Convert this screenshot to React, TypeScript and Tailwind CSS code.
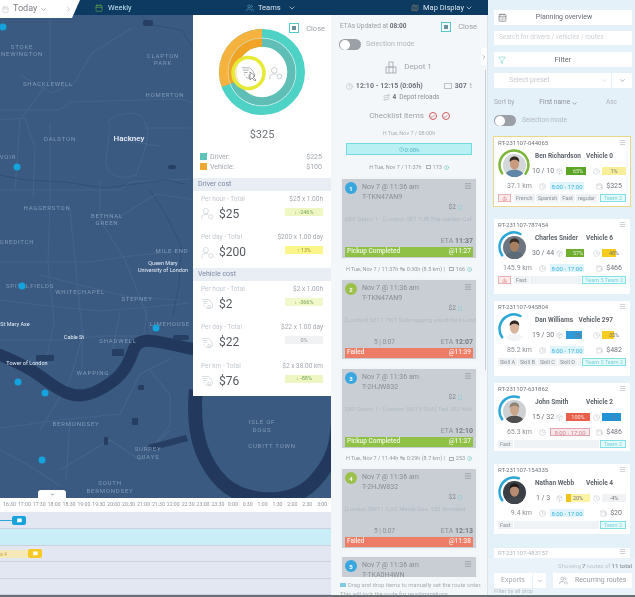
import React from "react";
import { ChevronDown, ChevronRight, Menu, Clock, Check, TriangleAlert, Filter, CalendarDays, Package, MessageSquare, Info, Users, Map as MapIcon, Calendar, Route, Wallet } from "lucide-react";

const Van = ({ s = 14, c = "#a9b0ba" }: { s?: number; c?: string }) => (
  <svg width={s} height={s} viewBox="0 0 16 16" fill="none" stroke={c} strokeWidth="0.8">
    <path d="M1 3h8M2 5.5h6M3 8h4M4.5 10.5H3" />
    <path d="M9 3l3 2.5 2 3.5v3.5l-2 1.5h-5l-2-1.5" />
    <circle cx="10" cy="12" r="1.7" />
  </svg>
);
const Driver = ({ s = 14, c = "#a9b0ba" }: { s?: number; c?: string }) => (
  <svg width={s} height={s} viewBox="0 0 16 16" fill="none" stroke={c} strokeWidth="0.8">
    <circle cx="6" cy="5" r="3.2" />
    <path d="M1 15v-2.5c0-2 2-3.5 5-3.5 1 0 2 .2 2.8.5" />
    <circle cx="12" cy="12" r="2.6" />
  </svg>
);
const CloseBox = () => (
  <span className="w-[10px] h-[10px] border border-[#58c8cf] flex items-center justify-center">
    <span className="w-[4px] h-[4px] bg-[#6b8f9c]" />
  </span>
);
const Toggle = () => (
  <span className="w-[22px] h-[11px] rounded-full bg-[#9ba0a6] flex items-center">
    <span className="w-[10px] h-[10px] ml-[1px] rounded-full bg-white" />
  </span>
);

const labels: [string, number, number][] = [
  ["STOKE", 22, 46], ["NEWINGTON", 22, 53], ["SHACKLEWELL", 48, 83], ["CLAPTON", 163, 55], ["PARK", 163, 62],
  ["HOMERTON", 165, 94], ["DALSTON", 60, 138], ["VOIR", 8, 156], ["HAGGERSTON", 47, 207], ["BETHNAL", 107, 215],
  ["GREEN", 107, 222], ["OREDITCH", 17, 241], ["MILE END", 172, 250], ["SPITALFIELDS", 30, 285], ["WHITECHAPEL", 80, 291],
  ["STEPNEY", 137, 298], ["LIMEHOUSE", 170, 323], ["SHADWELL", 118, 340], ["WAPPING", 93, 372], ["BERMONDSEY", 76, 423],
  ["SURREY", 148, 448], ["QUAYS", 148, 456], ["SOUTH", 110, 482], ["BERMONDSEY", 110, 490], ["ISLE OF", 262, 421], ["DOGS", 262, 429], ["CUBITT TOWN", 272, 445],
];
const places: [string, number, number][] = [
  ["Queen Mary", 163, 263], ["University of London", 163, 270], ["St Mary Axe", 15, 324], ["Cable St", 74, 337], ["Tower of London", 27, 363],
];
const dots: [number, number][] = [[3, 27], [17, 167], [22, 286], [156, 328], [18, 382], [45, 393], [42, 460]];

function MapArt() {
  return (
    <svg className="absolute inset-0 w-full h-full" viewBox="0 15 331 483" preserveAspectRatio="none" fill="none">
      <g stroke="#4c6c93" strokeWidth="1.1" opacity="0.55">
        <path d="M0 110h60l10-8 110-3 12 3M20 75l32 18 22-10 18-30 40-25M50 20v60l-30 40-5 70M0 120l25-2 10 30-2 50M110 125c-8-8 20-14 30-10 6 8 10 15 6 30l-10 30c-10 4-30 4-30-14z" />
        <path d="M50 122v80l-2 60 6 60-8 40M0 190h120l10-8 60-3M70 210l6 60 6 60 0 40M120 140l40 6M145 128h45M100 180v40l25 40 20 50 8 30" />
        <path d="M0 262h90l40-6 60-6M40 275l40 10 50 12 50 3M0 300l40 5 60 6 50-4 40-4M84 330l-14 50-15 25-15 25M0 340l60 0 40-4 50 0M120 312l-8 40M147 310l-4 32" />
        <path d="M0 428l60-8 60-6 20-40 30-15M70 420l-4 60M0 450l30 16 30 20M60 470l50-30 30 20 30-30M150 370l20 25 0 30-20 25M196 200l-40-6-40 25" />
      </g>
      <g stroke="#2c4a70" strokeWidth="1" opacity="0.6">
        <path d="M140 15l12 10 30 5 12 20M0 175l25 5 40 2 40 6 30-4 30-4 20 4M150 190l16 25 15 30 -2 40 -6 30" />
      </g>
      <path d="M-5 353C25 365 35 372 47 381S75 402 97 391s30-22 36-40 27-8 60-2l50 6" stroke="#22395d" strokeWidth="12" />
      <path d="M196 390c-4 40 4 70 26 92s70 24 92 0 22-40 24-58" stroke="#22395d" strokeWidth="14" />
      <g fill="#263e61">
        <rect x="173" y="335" width="16" height="5" rx="2" />
        <rect x="112" y="349" width="12" height="7" rx="1" />
        <rect x="36" y="355" width="18" height="6" rx="1" />
        <path d="M148 445l38-10 2 6-38 10z" />
        <rect x="132" y="418" width="6" height="7" rx="1" />
        <rect x="104" y="437" width="4" height="8" rx="1" />
        <rect x="138" y="385" width="6" height="5" rx="1" />
        <rect x="143" y="20" width="10" height="6" rx="2" />
        <rect x="168" y="165" width="8" height="4" rx="2" />
      </g>
    </svg>
  );
}

function CostRow({ label, calc, value, chip, chipCls, icon }: { label: string; calc: string; value: string; chip: string; chipCls: string; icon: React.ReactNode }) {
  return (
    <div className="h-[38.5px] px-[8px] pt-[4px] flex flex-col">
      <div className="flex justify-between text-[6.5px] text-[#c3c8cf] leading-[9px]">
        <span>{label}</span>
        <span className="text-[#a3a8b0]">{calc}</span>
      </div>
      <div className="flex justify-between items-start">
        <div className="flex items-center gap-[5px] mt-[1px]">
          {icon}
          <span className="text-[12px] leading-[18px] text-[#555a62]">{value}</span>
        </div>
        <span className={`mt-[4px] h-[8px] w-[38px] flex items-center justify-center text-[5.5px] ${chipCls}`}>{chip}</span>
      </div>
    </div>
  );
}

function CostPanel() {
  return (
    <div className="absolute left-[193px] top-0 w-[138px] h-[381px] bg-white flex flex-col z-10">
      <div className="h-[26px] mb-[-13px] flex items-center justify-end gap-[7px] pr-[6px] pt-[1px]">
        <CloseBox />
        <span className="text-[7.5px] text-[#9ea4ab]">Close</span>
      </div>
      <div className="flex justify-center h-[87px]">
        <svg width="88" height="88" viewBox="-44 -44 88 88">
          <circle r="38.5" fill="none" stroke="#4fd2c6" strokeWidth="9" />
          <circle r="29.5" fill="none" stroke="#5fbfb6" strokeWidth="8.5" />
          <circle r="38.5" fill="none" stroke="#f5b23e" strokeWidth="9" strokeDasharray="97 316" pathLength="316" transform="rotate(-90) scale(1,-1)" />
          <circle r="29.5" fill="none" stroke="#f0a325" strokeWidth="8.5" strokeDasharray="97 316" pathLength="316" transform="rotate(-90) scale(1,-1)" />
          <circle r="34" fill="none" stroke="#ffffff" strokeWidth="0.6" opacity="0.55" />
          <circle cx="-13.5" cy="1" r="15.5" fill="#ffffff" fillOpacity="0.75" stroke="#e7ea34" strokeWidth="3.5" />
          <g transform="translate(-21,-7)"><Van s={15} c="#8d939b" /></g>
          <path d="M-12 0l0 8 2-2 3 3 1-1-3-3 2-1z" fill="#fff" stroke="#555" strokeWidth="0.6" />
          <g transform="translate(7,-6)"><Driver s={14} c="#b5bac1" /></g>
        </svg>
      </div>
      <div className="text-center text-[11px] leading-[14px] text-[#6e7379] mt-[13px]">$325</div>
      <div className="px-[7px] mt-[10px] text-[7px] leading-[10px] text-[#a3a8ae]">
        <div className="flex items-center"><span className="w-[7px] h-[7px] bg-[#5cc3b9] mr-[3px]" /><span>Driver:</span><span className="ml-auto mr-[2px]">$225</span></div>
        <div className="flex items-center"><span className="w-[7px] h-[7px] bg-[#eeaa33] mr-[3px]" /><span>Vehicle:</span><span className="ml-auto mr-[2px]">$100</span></div>
      </div>
      <div className="mt-[6px] h-[13px] bg-[#e9eef4] pl-[5px] text-[7px] leading-[13px] text-[#7e89a5]">Driver cost</div>
      <CostRow label="Per hour - Total" calc="$25 x 1.00h" value="$25" chip="↓ -246%" chipCls="bg-[#eef7c4] text-[#7aa55a]" icon={<Driver s={13} c="#c5cad0" />} />
      <CostRow label="Per day - Total" calc="$200 x 1.00 day" value="$200" chip="↑ 13%" chipCls="bg-[#fbf58a] text-[#a59a3a]" icon={<Driver s={13} c="#c5cad0" />} />
      <div className="h-[13px] bg-[#e9eef4] pl-[5px] text-[7px] leading-[13px] text-[#7e89a5]">Vehicle cost</div>
      <CostRow label="Per hour - Total" calc="$2 x 1.00h" value="$2" chip="↓ -366%" chipCls="bg-[#f0f8cc] text-[#7aa55a]" icon={<Van s={13} c="#c5cad0" />} />
      <CostRow label="Per day - Total" calc="$22 x 1.00 day" value="$22" chip="0%" chipCls="bg-[#f0f2f4] text-[#9aa0a6]" icon={<Van s={13} c="#c5cad0" />} />
      <CostRow label="Per km - Total" calc="$2 x 38.00 km" value="$76" chip="↓ -88%" chipCls="bg-[#eef7c4] text-[#7aa55a]" icon={<Van s={13} c="#c5cad0" />} />
    </div>
  );
}

function StopCard({ n, color, code, money, addr, svc, eta, status, at, ok, cut }: { n: number; color: string; code: string; money: string; addr?: string; svc?: string; eta?: string; status?: string; at?: string; ok: boolean; cut?: boolean }) {
  return (
    <div className={`mx-[9px] bg-[#f2f5f8] px-[2px] pt-[2px] ${cut ? "h-[22px] overflow-hidden" : "pb-[2px]"}`}>
      <div className="bg-[#c9ced4] h-[79px] px-[3px] pt-[3px] flex flex-col">
        <div className="flex items-start h-[20px]">
          <span className="w-[12px] h-[12px] rounded-full text-white text-[6px] font-bold flex items-center justify-center" style={{ backgroundColor: color }}>{n}</span>
          <div className="ml-[5px] text-[7px] leading-[10px] text-[#868d95]">
            <div>Nov 7 @ 11:36 am</div>
            <div>{code}</div>
          </div>
          <Menu className="ml-auto mr-[1px]" size={8} color="#8d939a" />
        </div>
        {!cut && (
          <>
            <div className="flex justify-end items-center gap-[2px] mt-[1px] h-[9px] text-[6.5px] text-[#8f959c] font-medium pr-[11px]">{money}<span className="w-[4px] h-[5px] border border-[#a8cdd3]" /></div>
            <div className="mt-[2px] text-[6px] leading-[10px] text-[#b0bac4] whitespace-nowrap">{addr}</div>
            <div className="mt-auto flex justify-between items-center text-[7px] leading-[10px] text-[#8a9097] pl-[29px] mb-[1px]">
              <span className="text-[6.5px]">{svc}</span>
              <span>ETA <b className="font-bold text-[#767c83]">{eta}</b></span>
            </div>
            <div className={`h-[10px] px-[2px] flex justify-between items-center text-[6.5px] font-medium text-white/85 mb-[1px] ${ok ? "bg-[#8fc146]" : "bg-[#ee7d67]"}`}>
              <span>{status}</span><span>{at}</span>
            </div>
          </>
        )}
      </div>
    </div>
  );
}

function RouteRow({ text, dur, cnt }: { text: string; dur?: string; cnt: string }) {
  return (
    <div className="h-[10px] flex justify-center items-center gap-[2px] text-[5.5px] text-[#959ba2] whitespace-nowrap">
      <span>{text}</span>
      {dur && <span>{dur}</span>}
      <span className="ml-[2px] w-[5px] h-[4px] border border-[#aab0b6]" />
      <span>{cnt}</span>
      <Info size={5} color="#49bfb4" />
    </div>
  );
}

function RoutePanel() {
  return (
    <div className="relative w-[157px] h-[580px] bg-[#f4f7fa] flex flex-col overflow-hidden border-r border-[#dde3ea]">
      <div className="h-[24px] flex items-center pl-[9px] pr-[10px] text-[6.5px] text-[#9aa0a6] shrink-0">
        <span>ETAs Updated at <b className="text-[#696f76]">08:00</b></span>
        <span className="ml-auto mr-[7px]"><CloseBox /></span>
        <span className="text-[7.5px]">Close</span>
      </div>
      <div className="h-[11px] pl-[8px] flex items-center gap-[5px] text-[7px] text-[#b3b8be] shrink-0"><Toggle /><span>Selection mode</span></div>
      <div className="h-[12px] mt-[11px] flex items-center justify-center gap-[7px] text-[8px] text-[#a2a7ad] shrink-0 ml-[-1px]">
        <svg width="12" height="13" viewBox="0 0 12 13" fill="none" stroke="#9da3aa" strokeWidth="0.8"><rect x="4" y="1" width="4" height="5" /><rect x="1" y="6" width="10" height="6" /><path d="M4 6v6M8 6v6" /></svg>
        <span>Depot 1</span>
      </div>
      <div className="mt-[7px] h-[12px] flex items-center justify-center gap-[3px] text-[7px] text-[#70767d] shrink-0">
        <Clock size={7} color="#b4bac0" /><b className="font-bold mr-[18px]">12:10 - 12:15 (0:06h)</b>
        <span className="w-[8px] h-[6px] border border-[#bcc1c7]" /><b className="font-bold">307</b><span className="text-[#a7acb2]">t</span>
      </div>
      <div className="h-[11px] flex items-center justify-center gap-[3px] text-[6.5px] text-[#8b9198] shrink-0 ml-[4px]">
        <Route size={7} color="#b4bac0" /><b className="text-[#70767d]">4</b><span>Depot reloads</span>
      </div>
      <div className="mt-[7px] h-[12px] flex items-center justify-center gap-[5px] text-[8px] text-[#9da3a9] shrink-0 ml-[1px]">
        <span>Checklist items</span>
        <span className="w-[8px] h-[8px] rounded-full border border-[#cf5a5f] flex items-center justify-center"><Check size={5} color="#b84a50" strokeWidth={3} /></span>
        <span className="w-[8px] h-[8px] rounded-full border border-[#cf5a5f] flex items-center justify-center"><Check size={5} color="#b84a50" strokeWidth={3} /></span>
      </div>
      <div className="mt-[6px] h-[10px] flex items-center justify-center text-[5.5px] text-[#a9aeb4] shrink-0">H Tue, Nov 7 / 08:00h</div>
      <div className="mx-[15px] mt-[5px] h-[12px] bg-[#b9f0f4] border border-[#74dae1] flex items-center justify-center gap-[1px] text-[6px] text-[#55b9c1] shrink-0">
        <Clock size={5} />0:08h
      </div>
      <div className="mt-[7px] shrink-0"><RouteRow text="H Tue, Nov 7 / 11:37h" cnt="173" /></div>
      <div className="mt-[5px] flex flex-col">
        <StopCard n={1} color="#39a7dd" code="T-TKN47AN9" money="$2" addr="DEP Depot 1 - [London SE1 1UB The Garden Caf" eta="11:37" status="Pickup Completed" at="@11:27" ok />
        <div className="h-[18px] flex items-center"><div className="w-full"><RouteRow text="H Tue, Nov 7 / 11:37h" dur="↹ 0:30h (8.5 km) |" cnt="166" /></div></div>
        <StopCard n={2} color="#9bc14b" code="T-TKN47AN9" money="$2" addr="[London] SE11 7WT Submapping sresthford Lond" svc="5 | 0:07" eta="12:07" status="Failed" at="@11:39" ok={false} />
        <div className="h-[6px]" />
        <StopCard n={3} color="#39a7dd" code="T-2HJW832" money="$2" addr="DEP Depot 1 - [London SW13 9DA] Tesl 353 Nok" eta="12:10" status="Pickup Completed" at="@11:37" ok />
        <div className="h-[17px] flex items-center"><div className="w-full"><RouteRow text="H Tue, Nov 7 / 11:44h" dur="↹ 0:29h (8.7 km) |" cnt="253" /></div></div>
        <StopCard n={4} color="#9bc14b" code="T-2HJW832" money="$2" addr="[London SW11 2JG] Marek Dee, 103 Wimbled" svc="5 | 0:07" eta="12:13" status="Failed" at="@11:38" ok={false} />
        <div className="h-[5px]" />
        <StopCard n={5} color="#39a7dd" code="T-TKA0H4WN" money="$2" ok cut />
      </div>
      <div className="absolute left-0 right-0 bottom-0 h-[18px] bg-[#f4f7fa] pl-[9px] pt-[4px] text-[5.8px] leading-[9px] text-[#a9aeb5] whitespace-nowrap">
        <span className="inline-block w-[6px] h-[4px] bg-[#7ecbe5] mr-[2px] align-middle" />Drag and drop items to manually set the route order.
        <div>This will lock the route for reoptimizations.</div>
      </div>
      <div className="absolute right-0 top-[33px] w-[6px] h-[17px] bg-white flex items-center justify-center"><ChevronRight size={6} color="#666" /></div>
      <div className="absolute right-[1px] top-[55px] w-[1.5px] h-[300px] bg-[#c6ced8]" />
    </div>
  );
}

const Face = ({ skin, hair, shirt, bg = "#cdd3d9" }: { skin: string; hair: string; shirt: string; bg?: string }) => (
  <svg width="23" height="23" viewBox="0 0 22 22">
    <clipPath id="a"><circle cx="11" cy="11" r="11" /></clipPath>
    <g clipPath="url(#a)">
      <rect width="22" height="22" fill={bg} />
      <path d="M2 22c0-5 4-7 9-7s9 2 9 7z" fill={shirt} />
      <ellipse cx="11" cy="9.5" rx="4.3" ry="5.5" fill={skin} />
      <path d="M6.5 8c-.5-4 2-5.5 4.500-5.500S15.800 4 15.500 8c-1-2-3-2.500-4.500-2.500S7.500 6 6.500 8z" fill={hair} />
    </g>
  </svg>
);

function Bar({ pct, fill, color, text, track = "bg-white" }: { pct: number; fill?: boolean; color: string; text: string; track?: string }) {
  return (
    <span className={`relative w-[24px] h-[8px] ${track} flex items-center justify-center text-[5.5px] text-[#777] overflow-hidden shrink-0`}>
      <span className="absolute left-0 top-0 bottom-0" style={{ width: `${pct}%`, backgroundColor: color }} />
      <span className={`relative ${fill ? "text-white/80" : ""}`}>{text}</span>
    </span>
  );
}

type DriverInfo = {
  id: string; name: string; veh: string; count: string; km: string; cost: string; face: React.ReactNode; ring: string; ringDash: string;
  b1: React.ReactNode; b2: React.ReactNode; tags: string[]; warn?: boolean; team: string; late?: boolean; h: string; sel?: boolean;
};

function DriverCard(d: DriverInfo) {
  return (
    <div className={`relative mr-[5px] bg-white ${d.h} px-[4px] flex flex-col shrink-0 ${d.sel ? "outline outline-1 outline-[#ecd788]" : ""}`}>
      <div className="flex items-center justify-between text-[6px] leading-[9px] text-[#6f757c] pt-[1px]">
        <span>{d.id}</span><Menu size={7} color="#aab0b6" />
      </div>
      <div className="flex items-start h-[32px] mt-[2px]">
        <div className="relative w-[32px] h-[32px] shrink-0 flex items-center justify-center">
          <svg className="absolute inset-0" width="32" height="32" viewBox="0 0 32 32" fill="none">
            <circle cx="16" cy="16" r="14.500" stroke={d.ring} strokeWidth="2.500" strokeDasharray={d.ringDash} pathLength="100" transform="rotate(-215 16 16)" strokeLinecap="round" />
          </svg>
          {d.face}
        </div>
        <div className="ml-[2px] flex-1 flex flex-col pt-[2px]">
          <div className="flex justify-between text-[6.5px] leading-[10px] font-bold text-[#5f656c] pl-[3px] pr-[13px]"><span>{d.name}</span><span>{d.veh}</span></div>
          <div className="flex items-center mt-[5px] text-[7px] text-[#6f757c] h-[10px]">
            <span className="w-[22px] text-center whitespace-nowrap shrink-0">{d.count}</span>
            <Package className="ml-[2px] mr-[3px] shrink-0" size={7} color="#c9ced4" />
            {d.b1}
            <Clock className="ml-[3px] mr-[2px] shrink-0" size={7} color="#c9ced4" />
            {d.b2}
          </div>
        </div>
      </div>
      <div className="flex items-center h-[10px] text-[7px] text-[#8b9096]">
        <span className="w-[34px] text-right whitespace-nowrap">{d.km}</span>
        <Clock className="ml-[7px] mr-[4px]" size={7} color="#bfc4ca" />
        {d.late ? (
          <span className="h-[8px] w-[40px] border border-[#e3a6ae] bg-[#f8e7ea] text-[#cc8a94] text-[6px] flex items-center justify-center">8:00 - 17:00</span>
        ) : (
          <span className="h-[8px] w-[34px] bg-[#dff5fb] text-[#3db4dc] text-[6px] flex items-center justify-center">8:00 - 17:00</span>
        )}
        <Wallet className="ml-auto mr-[3px]" size={7} color="#c4c9cf" />
        <span className="text-[#6f757c] pr-[4px]">{d.cost}</span>
      </div>
      <div className="flex items-center gap-[1px] mt-[2px] h-[10px] text-[5.5px] text-[#8c9299]">
        {d.warn && <span className="w-[13px] h-[8px] bg-[#fdeaea] border border-[#eeb2b2] flex items-center justify-center mr-[2px]"><TriangleAlert size={5} color="#e26d6d" /></span>}
        {d.tags.map((t) => <span key={t} className="bg-[#eff2f5] h-[8px] px-[2px] flex items-center">{t}</span>)}
        <span className="flex-1 bg-[#f0f3f6] h-[8px]" />
        <span className="h-[8px] px-[2px] min-w-[26px] border border-[#7fe0e6] bg-[#e6fafb] text-[#7ad3da] flex items-center justify-center whitespace-nowrap">{d.team}</span>
      </div>
    </div>
  );
}

function Btn({ children, cls = "" }: { children: React.ReactNode; cls?: string }) {
  return <div className={`h-[15px] bg-white flex items-center text-[7px] text-[#666c73] shrink-0 ${cls}`}>{children}</div>;
}

function RightPanel() {
  return (
    <div className="relative flex-1 h-[595px] bg-[#e5f1f9] flex flex-col pl-[6px] overflow-hidden">
      <div className="h-[10px] shrink-0" />
      <Btn cls="mr-[3px] pl-[4px] relative justify-center"><CalendarDays className="absolute left-[4px]" size={9} color="#7c8288" /><span className="ml-[-2px]">Planning overview</span></Btn>
      <div className="mt-[6px] mr-[3px] h-[14px] bg-white pl-[5px] flex items-center text-[6.5px] text-[#ccd1d6] shrink-0">Search for drivers / vehicles / routes</div>
      <Btn cls="mt-[7px] mr-[3px] relative justify-center"><Filter className="absolute left-[4px]" size={8} color="#7fdad6" /><span className="text-[7.5px]">Filter</span></Btn>
      <div className="mt-[6px] mr-[3px] h-[15px] flex gap-[1px] shrink-0">
        <div className="flex-1 bg-white flex items-center pl-[15px] text-[7px] text-[#c5cad0]">Select preset<ChevronDown className="ml-auto mr-[3px]" size={7} color="#d0d5da" /></div>
        <div className="w-[20px] bg-white flex items-center justify-center"><ChevronDown size={7} color="#7c8288" /></div>
      </div>
      <div className="mt-[10px] mr-[3px] h-[10px] flex items-center text-[6.5px] text-[#a4a9af] shrink-0">
        <span>Sort by</span>
        <span className="ml-[25px] text-[#8b9096]">First name</span><ChevronDown className="ml-[1px]" size={7} color="#777" />
        <span className="ml-auto text-[#adb2b8]">Asc</span><span className="w-[15px]" />
      </div>
      <div className="mt-[7px] h-[11px] flex items-center gap-[6px] text-[6.5px] text-[#b2b7bd] shrink-0"><Toggle /><span>Selection mode</span></div>
      <div className="mt-[11px] flex flex-col">
        <DriverCard sel h="h-[69px]" id="RT-231107-044065" name="Ben Richardson" veh="Vehicle 0" count="10 / 10" km="37.1 km" cost="$325" ring="#7db63c" ringDash="70 30"
          face={<Face skin="#c99a7d" hair="#33281f" shirt="#5f86a6" bg="#d3d7da" />}
          b1={<Bar pct={85} fill color="#5ba526" text="65%" />} b2={<Bar pct={100} color="#f9ef9a" text="1%" />}
          tags={["French", "Spanish", "Fast", "regular"]} warn team="Team 2" />
        <DriverCard h="h-[75px] mt-[13px]" id="RT-231107-787454" name="Charles Snider" veh="Vehicle 6" count="30 / 44" km="145.9 km" cost="$466" ring="#2ba6d8" ringDash="42 58"
          face={<Face skin="#a9805f" hair="#3a2c23" shirt="#5c6b78" bg="#6d7680" />}
          b1={<Bar pct={75} fill color="#6fae2e" text="57%" />} b2={<Bar pct={60} color="#f5cc1e" text="48%" />}
          tags={["Fast"]} warn team="Team 5 Team 2" />
        <DriverCard h="h-[75px] mt-[7px]" id="RT-231107-945804" name="Dan Williams" veh="Vehicle 297" count="19 / 30" km="85.2 km" cost="$482" ring="#2ba6d8" ringDash="42 58"
          face={<Face skin="#d8b49c" hair="#2e2722" shirt="#f2f4f6" bg="#ffffff" />}
          b1={<Bar pct={65} color="#2f9ad9" text="5%" />} b2={<Bar pct={50} color="#f8cc22" text="35%" />}
          tags={["Skill A", "Skill B", "Skill C", "Skill D"]} team="Team 5 Team 2" />
        <DriverCard h="h-[68px] mt-[7px]" id="RT-231107-631862" name="John Smith" veh="Vehicle 2" count="15 / 32" km="65.3 km" cost="$486" ring="#2ba6d8" ringDash="40 60" late
          face={<Face skin="#c9a58a" hair="#8d8272" shirt="#4f4f4f" bg="#ccd0d3" />}
          b1={<Bar pct={100} fill color="#e8604a" text="100%" />} b2={<Bar pct={80} color="#2393d6" text="%" />}
          tags={["Fast"]} team="Team 2" />
        <DriverCard h="h-[70px] mt-[13px]" id="RT-231107-154335" name="Nathan Webb" veh="Vehicle 4" count="1 / 3" km="9.4 km" cost="$20" ring="#2ba6d8" ringDash="40 60"
          face={<Face skin="#b88c70" hair="#1f1c1b" shirt="#41464c" bg="#3a3f45" />}
          b1={<Bar pct={20} color="#f1c21b" text="20%" track="bg-[#fdf3a7]" />} b2={<Bar pct={0} color="#eee" text="-4%" track="bg-[#f0f2f4]" />}
          tags={["Fast"]} team="Team 2" />
        <div className="mt-[14px] mr-[5px] h-[12px] bg-white px-[4px] flex justify-between text-[6px] leading-[9px] text-[#b4b9bf] shrink-0"><span>RT-231107-483157</span><Menu size={7} color="#aab0b6" /></div>
      </div>
      <div className="absolute left-0 right-0 bottom-0 h-[37px] bg-[#eaf3f9] pl-[6px] flex flex-col">
        <div className="h-[15px] pr-[3px] flex items-center justify-end text-[6px] text-[#c0c5cb]">Showing <b className="mx-[1px] text-[#9aa0a6]">7</b> routes of <b className="ml-[1px] text-[#9aa0a6]">11 total</b></div>
        <div className="flex h-[15px] gap-[7px] pr-[3px]">
          <div className="w-[52px] flex gap-[1px]">
            <div className="flex-1 bg-white flex items-center justify-center text-[7px] text-[#a5aab0]">Exports</div>
            <div className="w-[13px] bg-white flex items-center justify-center"><ChevronDown size={6} color="#888" /></div>
          </div>
          <div className="flex-1 bg-white flex items-center pl-[6px] gap-[7px] text-[7px] whitespace-nowrap text-[#979da3]"><Users size={9} color="#aab0b6" />Recurring routes</div>
        </div>
        <div className="text-[5.5px] leading-[7px] text-[#b8bdc3]">Filter by all drop</div>
      </div>
    </div>
  );
}

function Timeline() {
  const times = ["16:30", "17:00", "17:30", "18:00", "18:30", "19:00", "19:30", "20:00", "20:30", "21:00", "21:30", "22:00", "22:30", "23:00", "23:30", "0:00", "0:30", "1:00", "1:30", "2:00", "2:30", "3:00"];
  const rows = ["bg-[#e3e7f1]", "bg-[#c9eef8]", "bg-[#e3e7f1]", "bg-[#e3e7f1]", "bg-[#e3e7f1]"];
  return (
    <div className="h-[97px] bg-white flex flex-col shrink-0">
      <div className="h-[15px] flex items-center pl-[2px] text-[5.2px] text-[#8f959c] whitespace-nowrap border-b border-[#e5e9ef]">
        {times.map((t) => <span key={t} className="w-[14.9px] text-center shrink-0">{t}</span>)}
      </div>
      {rows.map((r, i) => (
        <div key={i} className={`relative flex-1 ${r} border-b border-[#cbd2dd] flex items-center`}>
          {i === 0 && <><span className="w-[12px] h-[1.500px] bg-[#2fa6dc]" /><span className="w-[14px] h-[9px] rounded-[2px] bg-[#18a3dc] flex items-center justify-center"><MessageSquare size={5} fill="#fff" color="#fff" /></span></>}
          {i === 2 && <><span className="w-[28px] h-[8px] bg-[#f6e9b8] text-[5px] leading-[8px] text-[#c9a94a]">a  4</span><span className="w-[14px] h-[9px] rounded-[2px] bg-[#f6c925] flex items-center justify-center"><MessageSquare size={5} fill="#fff" color="#fff" /></span></>}
        </div>
      ))}
    </div>
  );
}

export default function App() {
  return (
    <div className="relative w-[635px] h-[597px] overflow-hidden bg-[#6a6f75] flex font-['Roboto',sans-serif] blur-[0.4px]">
      <div className="w-[488px] h-[595px] flex flex-col shrink-0">
        <header className="relative h-[15px] bg-[#0c3a60] flex items-center text-[7.5px] text-[#d6e4ef] shrink-0 z-20">
          <div className="absolute left-0 top-0 h-[18px] w-[80px] bg-white [clip-path:polygon(0_0,100%_0,90%_100%,0_100%)] flex items-center pl-[2px] gap-[3px] text-[9px] text-[#7b8086]">
            <Calendar size={7} color="#c5c9ce" /><span className="ml-[1px]">Today</span><ChevronDown size={7} color="#777" /><ChevronRight className="ml-[14px]" size={9} color="#bbb" />
          </div>
          <Calendar className="absolute left-[95px]" size={8} color="#5aa04a" />
          <span className="absolute left-[108px] text-[#bfe0f0]">Weekly</span>
          <Users className="absolute left-[246px]" size={8} color="#4d92b8" />
          <span className="absolute left-[258px]">Teams</span>
          <ChevronDown className="absolute left-[288px]" size={8} color="#dfe8ef" />
          <MapIcon className="absolute left-[411px]" size={8} color="#8c7f6a" />
          <span className="absolute left-[423px]">Map Display</span>
          <ChevronDown className="absolute left-[465px]" size={8} color="#dfe8ef" />
        </header>
        <div className="relative flex flex-1 min-h-0">
          <div className="w-[331px] flex flex-col shrink-0">
            <div className="relative flex-1 bg-[#3a5a82] overflow-hidden">
              <MapArt />
              {labels.map(([t, x, y]) => (
                <span key={t + x} className="absolute -translate-x-1/2 -translate-y-1/2 text-[6px] tracking-[0.8px] text-[#829ab7] whitespace-nowrap" style={{ left: x, top: y - 15 }}>{t}</span>
              ))}
              {places.map(([t, x, y]) => (
                <span key={t} className="absolute -translate-x-1/2 -translate-y-1/2 text-[5.500px] text-[#e6edf4] whitespace-nowrap" style={{ left: x, top: y - 15 }}>{t}</span>
              ))}
              <span className="absolute left-[129px] top-[124px] -translate-x-1/2 -translate-y-1/2 text-[8px] font-medium text-[#eef3f8]">Hackney</span>
              {dots.map(([x, y]) => (
                <span key={x} className="absolute w-[7px] h-[7px] rounded-full bg-[#14a3dc] -translate-x-1/2 -translate-y-1/2" style={{ left: x, top: y - 15 }} />
              ))}
              <div className="absolute left-[38px] bottom-0 w-[28px] h-[8px] bg-white rounded-t-[3px] flex items-center justify-center"><ChevronDown size={5} color="#555" strokeWidth={3} /></div>
            </div>
            <Timeline />
          </div>
          <CostPanel />
          <RoutePanel />
        </div>
      </div>
      <RightPanel />
    </div>
  );
}
